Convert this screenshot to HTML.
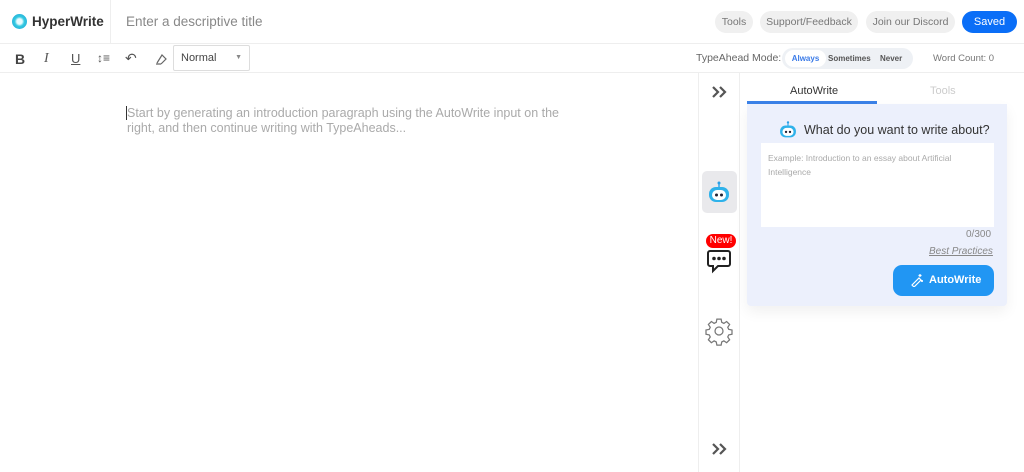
<!DOCTYPE html>
<html><head><meta charset="utf-8"><style>
*{box-sizing:border-box;margin:0;padding:0}
body{width:1024px;height:472px;overflow:hidden;background:#fff;font-family:"Liberation Sans",sans-serif;position:relative;color:#333}
.abs{position:absolute}
.pill{position:absolute;top:11px;height:22px;border-radius:11px;background:#f0f0f0;color:#777;font-size:10.5px;line-height:22px;text-align:center;white-space:nowrap}
</style></head><body>
<!-- header -->
<div class="abs" style="left:0;top:0;width:1024px;height:44px;border-bottom:1px solid #eee"></div>
<div class="abs" style="left:110px;top:0;width:1px;height:44px;background:#eee"></div>
<div class="abs" style="left:12px;top:14px;width:15px;height:15px;border-radius:50%;background:radial-gradient(circle at 50% 50%,#e8fbff 0 25%,#35c9e0 45%,#1aa0d8 100%)"></div>
<div class="abs" style="left:32px;top:14px;font-size:13.5px;font-weight:bold;color:#333">HyperWrite</div>
<div class="abs" style="left:126px;top:14px;font-size:13.5px;color:#888">Enter a descriptive title</div>
<div class="pill" style="left:715px;width:38px">Tools</div>
<div class="pill" style="left:760px;width:98px">Support/Feedback</div>
<div class="pill" style="left:866px;width:89px">Join our Discord</div>
<div class="pill" style="left:962px;width:55px;background:#0a6ef7;color:#fff;font-size:11px">Saved</div>
<!-- toolbar -->
<div class="abs" style="left:0;top:72px;width:1024px;height:1px;background:#eee"></div>
<div class="abs" style="left:15px;top:51px;font-size:14px;font-weight:bold;color:#444">B</div>
<div class="abs" style="left:44px;top:51px;font-size:14px;font-style:italic;font-family:'Liberation Serif',serif;color:#555">I</div>
<div class="abs" style="left:71px;top:51px;font-size:13px;text-decoration:underline;color:#555">U</div>
<div class="abs" style="left:97px;top:51px;font-size:12px;color:#555">↕≡</div>
<div class="abs" style="left:125px;top:50px;font-size:14px;color:#555">↶</div>
<svg class="abs" style="left:154px;top:52px" width="14" height="14" viewBox="0 0 14 14" fill="none" stroke="#666" stroke-width="1.2"><path d="M2 12h5M3 11l5-8 4 4-5 5"/></svg>
<div class="abs" style="left:173px;top:45px;width:77px;height:26px;border:1px solid #ddd;border-radius:2px;font-size:11px;line-height:24px;padding-left:7px;color:#444">Normal<span style="position:absolute;right:7px;top:0;font-size:7px;color:#888">▼</span></div>
<div class="abs" style="left:696px;top:52px;font-size:10.5px;color:#666">TypeAhead Mode:</div>
<div class="abs" style="left:782px;top:48px;width:131px;height:21px;border-radius:11px;background:#eef1f5"></div>
<div class="abs" style="left:785px;top:50px;width:41px;height:17px;border-radius:9px;background:#fff;color:#3b7be8;font-size:8px;font-weight:bold;line-height:17px;text-align:center">Always</div>
<div class="abs" style="left:828px;top:54px;font-size:8px;font-weight:bold;color:#555">Sometimes</div>
<div class="abs" style="left:880px;top:54px;font-size:8px;font-weight:bold;color:#555">Never</div>
<div class="abs" style="left:933px;top:53px;font-size:9.5px;color:#777">Word Count: 0</div>
<!-- editor -->
<div class="abs" style="left:126px;top:106px;width:1px;height:14px;background:#333"></div>
<div class="abs" style="left:127px;top:106px;width:440px;font-size:12.5px;line-height:15px;color:#aaa">Start by generating an introduction paragraph using the AutoWrite input on the right, and then continue writing with TypeAheads...</div>
<!-- sidebar -->
<div class="abs" style="left:698px;top:73px;width:1px;height:399px;background:#eee"></div>
<div class="abs" style="left:739px;top:73px;width:1px;height:399px;background:#eee"></div>
<svg class="abs" style="left:711px;top:85px" width="16" height="14" viewBox="0 0 16 14" fill="none" stroke="#555" stroke-width="2.2"><path d="M2 2l5 5-5 5M9 2l5 5-5 5"/></svg>
<svg class="abs" style="left:711px;top:442px" width="16" height="14" viewBox="0 0 16 14" fill="none" stroke="#555" stroke-width="2.2"><path d="M2 2l5 5-5 5M9 2l5 5-5 5"/></svg>
<div class="abs" style="left:702px;top:171px;width:35px;height:42px;border-radius:5px;background:#e9e9ec"></div>
<svg class="abs" style="left:706px;top:180px" width="26" height="24" viewBox="0 0 26 24"><circle cx="13" cy="3" r="1.5" fill="#2aa0e8"/><rect x="12.3" y="3" width="1.4" height="4" fill="#2aa0e8"/><rect x="3" y="7" width="20" height="15" rx="7" fill="#2fb2ea"/><rect x="6" y="10" width="14" height="10" rx="5" fill="#fff"/><circle cx="10.5" cy="15" r="1.5" fill="#223"/><circle cx="15.5" cy="15" r="1.5" fill="#223"/></svg>
<div class="abs" style="left:706px;top:234px;width:30px;height:14px;border-radius:7px;background:#f00;color:#fff;font-size:10px;line-height:14px;text-align:center">New!</div>
<svg class="abs" style="left:706px;top:249px" width="26" height="25" viewBox="0 0 26 25" fill="none" stroke="#222" stroke-width="2"><path d="M4 2h18a2 2 0 0 1 2 2v11a2 2 0 0 1-2 2H12l-5 5v-5H4a2 2 0 0 1-2-2V4a2 2 0 0 1 2-2z"/><circle cx="8" cy="9.5" r="0.8" fill="#222"/><circle cx="13" cy="9.5" r="0.8" fill="#222"/><circle cx="18" cy="9.5" r="0.8" fill="#222"/></svg>
<svg class="abs" style="left:704px;top:316px" width="30" height="30" viewBox="0 0 24 24" fill="none" stroke="#777" stroke-width="1"><circle cx="12" cy="12" r="3.2"/><path d="M10.3 2.5h3.4l.5 2.6 1.7.8 2.2-1.5 2.4 2.4-1.5 2.2.8 1.7 2.6.5v3.4l-2.6.5-.8 1.7 1.5 2.2-2.4 2.4-2.2-1.5-1.7.8-.5 2.6h-3.4l-.5-2.6-1.7-.8-2.2 1.5-2.4-2.4 1.5-2.2-.8-1.7-2.6-.5v-3.4l2.6-.5.8-1.7-1.5-2.2 2.4-2.4 2.2 1.5 1.7-.8z"/></svg>
<!-- right panel -->
<div class="abs" style="left:790px;top:85px;font-size:11px;color:#333">AutoWrite</div>
<div class="abs" style="left:930px;top:85px;font-size:11px;color:#ccc">Tools</div>
<div class="abs" style="left:747px;top:101px;width:130px;height:3px;background:#3b82e8"></div>
<div class="abs" style="left:747px;top:104px;width:260px;height:202px;background:#ecf0fc;border-radius:0 0 4px 4px;box-shadow:0 6px 14px rgba(0,0,0,0.06)"></div>
<svg class="abs" style="left:777px;top:120px" width="22" height="19" viewBox="0 0 26 24"><circle cx="13" cy="3" r="1.5" fill="#2aa0e8"/><rect x="12.3" y="3" width="1.4" height="4" fill="#2aa0e8"/><rect x="3" y="7" width="20" height="15" rx="7" fill="#2fb2ea"/><rect x="6" y="10" width="14" height="10" rx="5" fill="#fff"/><circle cx="10.5" cy="15" r="1.5" fill="#223"/><circle cx="15.5" cy="15" r="1.5" fill="#223"/></svg>
<div class="abs" style="left:804px;top:123px;font-size:12.5px;color:#333">What do you want to write about?</div>
<div class="abs" style="left:761px;top:143px;width:233px;height:84px;background:#fff"></div>
<div class="abs" style="left:768px;top:151px;width:220px;font-size:8.5px;line-height:14px;color:#aaa">Example: Introduction to an essay about Artificial Intelligence</div>
<div class="abs" style="left:966px;top:229px;font-size:10px;color:#888">0/300</div>
<div class="abs" style="left:929px;top:246px;font-size:10px;color:#888;font-style:italic;text-decoration:underline">Best Practices</div>
<div class="abs" style="left:893px;top:265px;width:101px;height:31px;border-radius:9px;background:#2196f3;color:#fff;font-size:11px;font-weight:bold;line-height:31px;padding-left:36px">AutoWrite</div>
<svg class="abs" style="left:910px;top:273px" width="14" height="14" viewBox="0 0 14 14" fill="none" stroke="#fff" stroke-width="1.2"><path d="M2 12l7-7 2 2-7 7zM10 1v3M8.5 2.5h3M12 7v2M11 8h2"/></svg>
</body></html>
